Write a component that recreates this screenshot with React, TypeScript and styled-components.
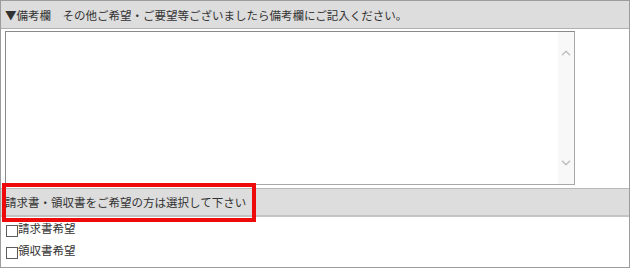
import React from "react";
import styled, { createGlobalStyle } from "styled-components";

const Global = createGlobalStyle`
  html, body { margin: 0; padding: 0; background: #ffffff; }
  body { font-family: "Noto Sans CJK JP", "Noto Sans", sans-serif; }
  * { box-sizing: border-box; }
`;

const Frame = styled.div`
  position: relative;
  width: 630px;
  height: 268px;
  border: 1px solid #9c9c9c;
  background: #ffffff;
  display: flex;
  flex-direction: column;
`;

const SectionHeader = styled.div<{ $second?: boolean }>`
  display: flex;
  align-items: center;
  height: ${(p) => (p.$second ? "29px" : "28px")};
  padding-left: 4px;
  background: #dddddd;
  border-top: ${(p) => (p.$second ? "1px solid #b8b8b8" : "none")};
  border-bottom: ${(p) => (p.$second ? "2px solid #c4c4c4" : "1px solid #b0b0b0")};
  font-size: 11.5px;
  color: #333333;
  white-space: nowrap;
`;

const TextAreaRow = styled.div`
  padding: 2px 0 0 4px;
  margin-bottom: 3px;
`;

const TextBox = styled.div`
  display: flex;
  width: 570px;
  height: 154px;
  border: 1px solid #8a8a8a;
  border-right-color: #a8a8a8;
  border-bottom-color: #a8a8a8;
  background: #ffffff;
`;

const Memo = styled.textarea`
  flex: 1;
  border: none;
  outline: none;
  resize: none;
  padding: 2px;
  font-family: inherit;
  font-size: 12px;
  background: transparent;
`;

const ScrollTrack = styled.div`
  width: 16px;
  background: #f8f8f8;
  display: flex;
  flex-direction: column;
  justify-content: space-between;
  align-items: center;
  padding: 18px 0 18px;
`;

const CheckList = styled.div`
  display: flex;
  flex-direction: column;
  padding: 0 0 0 4px;
`;

const CheckRow = styled.label`
  display: flex;
  align-items: center;
  height: 22px;
  font-size: 11.5px;
  color: #333333;
`;

const Box = styled.input`
  appearance: none;
  width: 12px;
  height: 12px;
  margin: 6px 0 0 1px;
  border: 1px solid #5c5c5c;
  background: #ffffff;
  flex: none;
`;

const Highlight = styled.div`
  position: absolute;
  left: 1px;
  top: 182px;
  width: 254px;
  height: 39px;
  border: 4px solid #ee0a0a;
  pointer-events: none;
`;

const Chevron = ({ up }: { up?: boolean }) => (
  <svg width="10" height="6" viewBox="0 0 10 6">
    <path
      d={up ? "M1 5.2 L5 1.2 L9 5.2" : "M1 0.8 L5 4.8 L9 0.8"}
      fill="none"
      stroke="#bdbdbd"
      strokeWidth="1.4"
    />
  </svg>
);

export default function App() {
  return (
    <>
      <Global />
      <Frame>
        <SectionHeader>▼備考欄　その他ご希望・ご要望等ございましたら備考欄にご記入ください。</SectionHeader>
        <TextAreaRow>
          <TextBox>
            <Memo />
            <ScrollTrack>
              <Chevron up />
              <Chevron />
            </ScrollTrack>
          </TextBox>
        </TextAreaRow>
        <SectionHeader $second>請求書・領収書をご希望の方は選択して下さい</SectionHeader>
        <CheckList>
          <CheckRow>
            <Box type="checkbox" />
            請求書希望
          </CheckRow>
          <CheckRow>
            <Box type="checkbox" />
            領収書希望
          </CheckRow>
        </CheckList>
        <Highlight />
      </Frame>
    </>
  );
}
